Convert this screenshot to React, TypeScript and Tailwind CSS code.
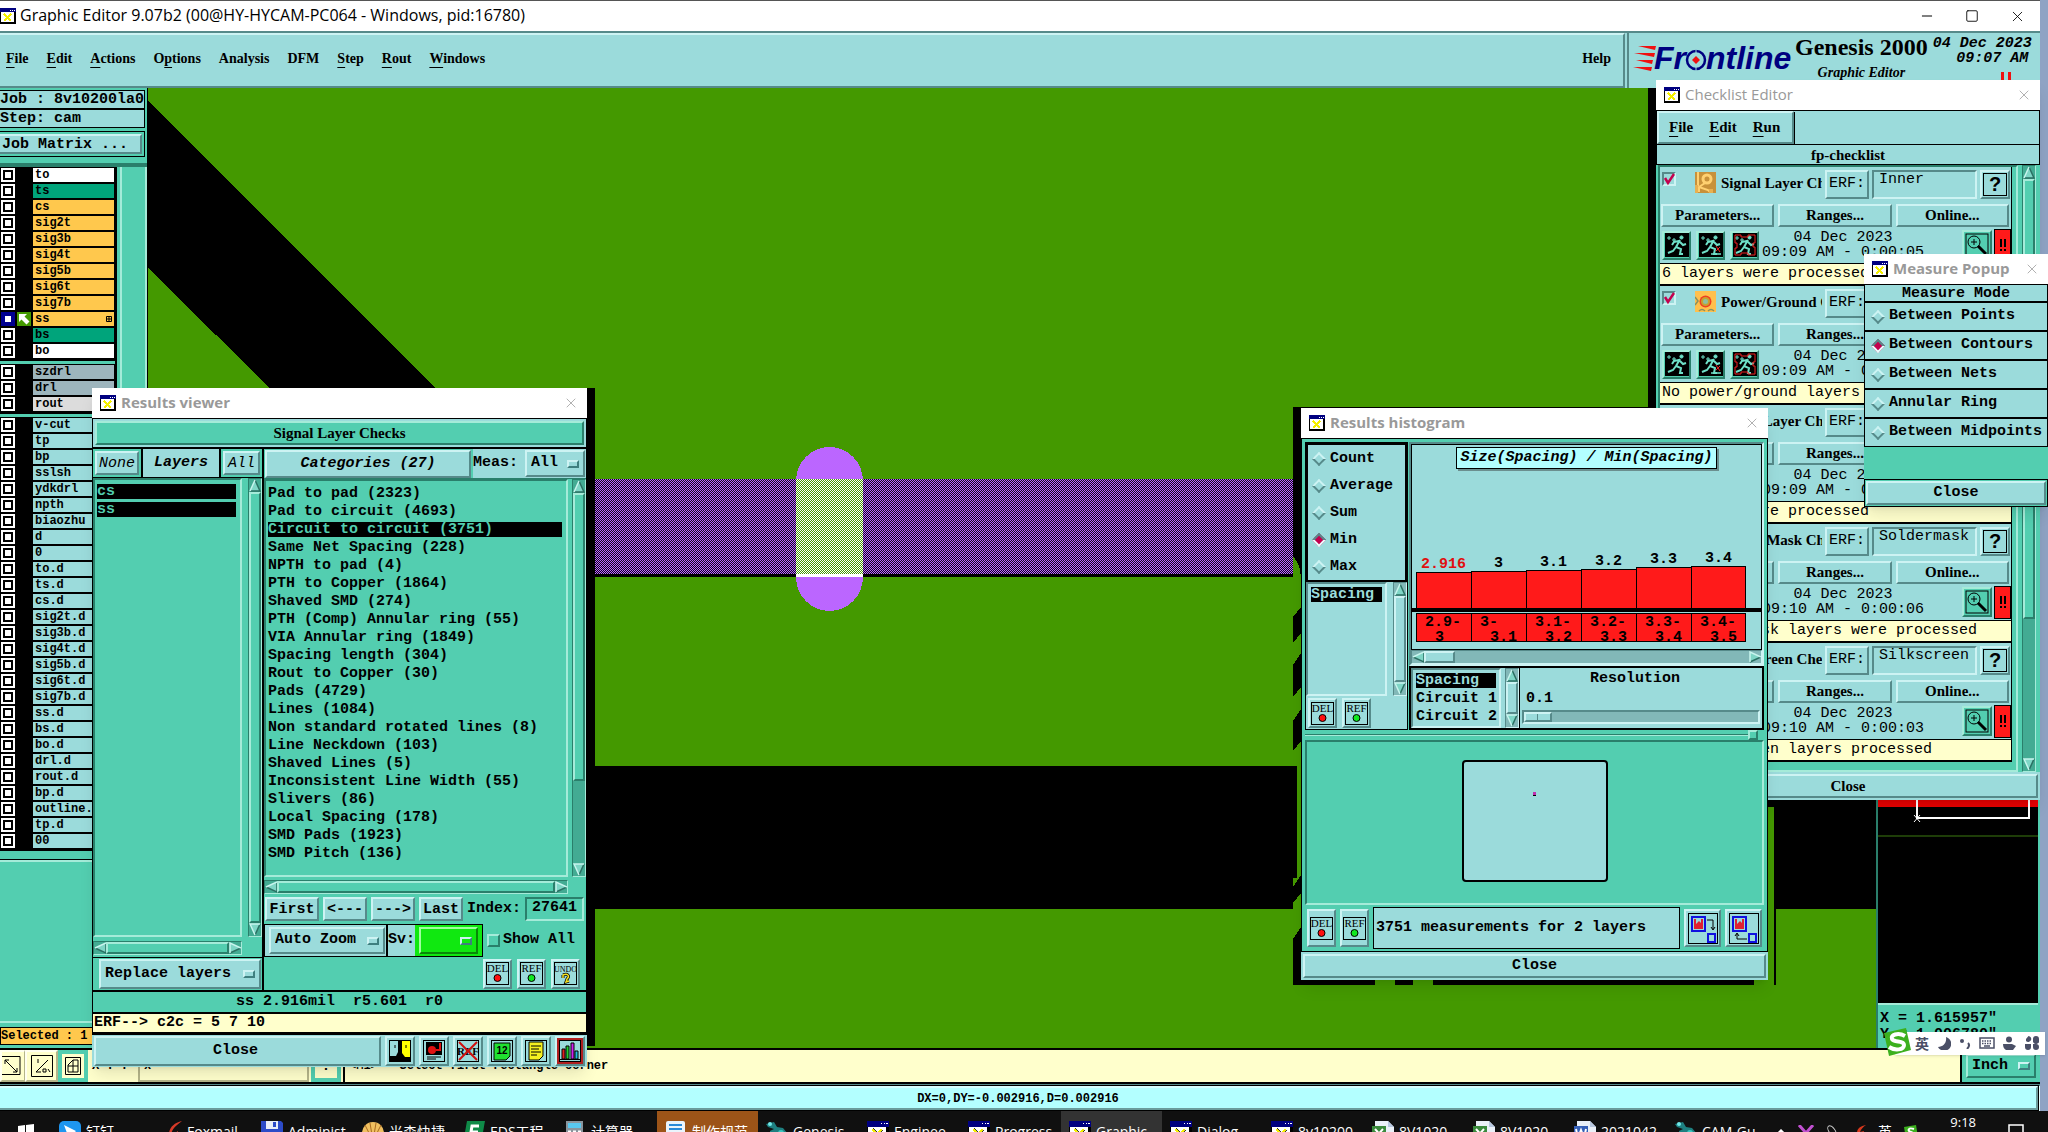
import React from "react";
import { X, Minus, Square } from "lucide-react";

const MONO = "font-['Liberation_Mono',monospace]";
const SERIF = "font-['Liberation_Serif',serif]";
const SANS = "font-['Open_Sans','Noto_Sans_CJK_SC',sans-serif]";

// motif style bevels
const CYAN_UP =
  "bg-[#9bdbdb] border-2 border-t-[#cdf3f3] border-l-[#cdf3f3] border-b-[#568a8a] border-r-[#568a8a]";
const CYAN_DOWN =
  "bg-[#9bdbdb] border-2 border-t-[#568a8a] border-l-[#568a8a] border-b-[#cdf3f3] border-r-[#cdf3f3]";
const TEAL_UP =
  "bg-[#53ceb0] border-2 border-t-[#a5ebd9] border-l-[#a5ebd9] border-b-[#2a7f6b] border-r-[#2a7f6b]";
const TEAL_DOWN =
  "bg-[#53ceb0] border-2 border-t-[#2a7f6b] border-l-[#2a7f6b] border-b-[#a5ebd9] border-r-[#a5ebd9]";
const CREAM_UP =
  "bg-[#ffffcc] border-2 border-t-[#fffff0] border-l-[#fffff0] border-b-[#b5b58a] border-r-[#b5b58a]";

const mainMenu = [
  { name: "File", at: 0 },
  { name: "Edit", at: 0 },
  { name: "Actions", at: 0 },
  { name: "Options", at: 1 },
  { name: "Analysis", at: -1 },
  { name: "DFM", at: -1 },
  { name: "Step", at: 0 },
  { name: "Rout", at: 0 },
  { name: "Windows", at: 0 },
];

const WHITE = "bg-white";
const GREEN = "bg-[#00a47b]";
const ORANGE = "bg-[#ffc84d]";
const GRAY = "bg-[#9db5bd]";
const CYAN = "bg-[#9bdbdb]";

const layerGroups = [
  [
    ["to", WHITE],
    ["ts", GREEN],
    ["cs", ORANGE],
    ["sig2t", ORANGE],
    ["sig3b", ORANGE],
    ["sig4t", ORANGE],
    ["sig5b", ORANGE],
    ["sig6t", ORANGE],
    ["sig7b", ORANGE],
    ["ss", ORANGE],
    ["bs", GREEN],
    ["bo", WHITE],
  ],
  [
    ["szdrl", GRAY],
    ["drl", GRAY],
    ["rout", "bg-[#dcdcdc]"],
  ],
  [
    "v-cut", "tp", "bp", "sslsh", "ydkdrl", "npth", "biaozhu", "d", "0",
    "to.d", "ts.d", "cs.d", "sig2t.d", "sig3b.d", "sig4t.d", "sig5b.d",
    "sig6t.d", "sig7b.d", "ss.d", "bs.d", "bo.d", "drl.d", "rout.d", "bp.d",
    "outline.d", "tp.d", "00",
  ].map((name) => [name, CYAN]),
];

const categories = [
  "Pad to pad (2323)",
  "Pad to circuit (4693)",
  "Circuit to circuit (3751)",
  "Same Net Spacing (228)",
  "NPTH to pad (4)",
  "PTH to Copper (1864)",
  "Shaved SMD (274)",
  "PTH (Comp) Annular ring (55)",
  "VIA Annular ring (1849)",
  "Spacing length (304)",
  "Rout to Copper (30)",
  "Pads (4729)",
  "Lines (1084)",
  "Non standard rotated lines (8)",
  "Line Neckdown (103)",
  "Shaved Lines (5)",
  "Inconsistent Line Width (55)",
  "Slivers (86)",
  "Local Spacing (178)",
  "SMD Pads (1923)",
  "SMD Pitch (136)",
];

const bars = [
  { value: "2.916", from: "2.9-", to: "3", height: 36 },
  { value: "3", from: "3-", to: "3.1", height: 37 },
  { value: "3.1", from: "3.1-", to: "3.2", height: 38 },
  { value: "3.2", from: "3.2-", to: "3.3", height: 39 },
  { value: "3.3", from: "3.3-", to: "3.4", height: 41 },
  { value: "3.4", from: "3.4-", to: "3.5", height: 42 },
];

const checks = [
  { title: "Signal Layer Checks", erf: "Inner", time: "09:09 AM - 0:00:05", message: "6 layers were processed" },
  { title: "Power/Ground Checks", erf: "Inner", time: "09:09 AM - 0:00:00", message: "No power/ground layers" },
  { title: "Outer Layer Checks", erf: "Outer", time: "09:09 AM - 0:00:05", message: "6 layers were processed" },
  { title: "Solder Mask Checks", erf: "Soldermask", time: "09:10 AM - 0:00:06", message: "2 solder mask layers were processed" },
  { title: "Silk Screen Checks", erf: "Silkscreen", time: "09:10 AM - 0:00:03", message: "2 silk screen layers processed" },
];

const measureModes = [
  "Between Points",
  "Between Contours",
  "Between Nets",
  "Annular Ring",
  "Between Midpoints",
];

const tasks = [
  { name: "钉钉", icon: "ding" },
  { name: "Foxmail", icon: "fox" },
  { name: "Administ", icon: "disk" },
  { name: "光森快捷", icon: "shell" },
  { name: "EDS工程", icon: "eds" },
  { name: "计算器", icon: "calc" },
  { name: "制作规范", icon: "note" },
  { name: "Genesis", icon: "genesis" },
  { name: "Enginee", icon: "x" },
  { name: "Progress", icon: "x" },
  { name: "Graphic", icon: "x" },
  { name: "Dialog", icon: "x" },
  { name: "8v10200", icon: "x" },
  { name: "8V1020", icon: "excel" },
  { name: "8V1020", icon: "excel" },
  { name: "2021042", icon: "word" },
  { name: "CAM-Gu", icon: "genesis" },
];

const XIcon = ({ className = "size-4" }: { className?: string }) => (
  <svg viewBox="0 0 16 16" className={`${className} shrink-0`} shapeRendering="crispEdges">
    <rect x="0" y="0" width="16" height="16" fill="#000" />
    <rect x="1" y="1" width="13" height="13" fill="#fff" />
    <rect x="0" y="0" width="16" height="4" fill="#000080" />
    <path d="M10 2h1M12 2h1M14 2h1" stroke="#fff" strokeWidth="1" />
    <path d="M4 6l7 7M11 6l-7 7" stroke="#333" strokeWidth="2" />
    <path d="M4 6l7 7M11 6l-7 7" stroke="#f5f000" strokeWidth="1.500" />
  </svg>
);

const TitleBar = ({ title }: { title: string }) => (
  <div className={`flex h-[30px] items-center bg-white pl-2 pr-2 text-[15px] leading-7 text-[#999] ${SANS}`}>
    <XIcon />
    <span className="ml-[5px] h-[30px] flex-1">{title}</span>
    <button aria-label={`Close ${title}`} className="text-[#8a8a8a]">
      <X size={16} strokeWidth={1} />
    </button>
  </div>
);

const Tri = ({ dir }: { dir: "up" | "down" | "left" | "right" }) => {
  const shapes = {
    up: ["M6 1L1 12", "M6 1L11 12H1", "6,1 11,12 1,12"],
    down: ["M11 1H1L6 12", "M11 1L6 12", "1,1 11,1 6,12"],
    left: ["M1 6L12 1", "M12 1V11L1 6", "1,6 12,1 12,11"],
    right: ["M1 11V1L12 6", "M12 6L1 11", "1,1 12,6 1,11"],
  };
  const [light, dark, body] = shapes[dir];
  return (
    <svg viewBox="0 0 12 13" className="h-[13px] w-3 shrink-0">
      <polygon points={body} fill="#7fd6c6" />
      <path d={dark} fill="none" stroke="#2a6f62" strokeWidth="1.5" />
      <path d={light} fill="none" stroke="#c8f5ee" strokeWidth="1.5" />
    </svg>
  );
};

const VScroll = ({ teal, thumb = "flex-1" }: { teal?: boolean; thumb?: string }) => (
  <div
    className={`flex w-[14px] shrink-0 flex-col items-center border ${
      teal
        ? "border-b-[#a5ebd9] border-l-[#2a7f6b] border-r-[#a5ebd9] border-t-[#2a7f6b] bg-[#43ab93]"
        : "border-b-[#cdf3f3] border-l-[#568a8a] border-r-[#cdf3f3] border-t-[#568a8a] bg-[#82b8b8]"
    }`}
  >
    <Tri dir="up" />
    <div className={`w-full ${thumb} ${teal ? TEAL_UP : CYAN_UP}`} />
    <div className={thumb === "flex-1" ? "" : "flex-1"} />
    <Tri dir="down" />
  </div>
);

const HScroll = ({ teal, thumb = "flex-1" }: { teal?: boolean; thumb?: string }) => (
  <div
    className={`flex h-[14px] items-center border ${
      teal
        ? "border-b-[#a5ebd9] border-l-[#2a7f6b] border-r-[#a5ebd9] border-t-[#2a7f6b] bg-[#43ab93]"
        : "border-b-[#cdf3f3] border-l-[#568a8a] border-r-[#cdf3f3] border-t-[#568a8a] bg-[#82b8b8]"
    }`}
  >
    <Tri dir="left" />
    <div className={`h-full ${thumb} ${teal ? TEAL_UP : CYAN_UP}`} />
    <div className={thumb === "flex-1" ? "" : "flex-1"} />
    <Tri dir="right" />
  </div>
);

const OptionMenu = ({
  label,
  value,
  className,
  bevel = CYAN_UP,
}: {
  label: string;
  value: string;
  className: string;
  bevel?: string;
}) => (
  <div className={`flex items-center ${bevel} ${className}`}>
    <select aria-label={label} className="min-w-0 flex-1 appearance-none bg-transparent outline-none">
      <option>{value}</option>
    </select>
    <span
      className="mr-1 h-2 w-3 shrink-0 border-2 border-b-[#3f7f7f] border-l-[#cdf3f3] border-r-[#3f7f7f] border-t-[#cdf3f3]"
    />
  </div>
);

const Diamond = ({ name, label, checked }: { name: string; label: string; checked?: boolean }) => (
  <label className="flex items-center gap-1.5">
    <input
      type="radio"
      name={name}
      defaultChecked={checked}
      className="ml-0.5 size-[10px] shrink-0 rotate-45 appearance-none border-2 border-b-[#568a8a] border-l-[#cdf3f3] border-r-[#568a8a] border-t-[#cdf3f3] checked:border-b-[#e8ffff] checked:border-l-[#568a8a] checked:border-r-[#e8ffff] checked:border-t-[#568a8a] checked:bg-[#c4004e]"
    />
    {label}
  </label>
);

const MarkButton = ({ text, className = "h-[30px] w-[29px]" }: { text: string; className?: string }) => {
  const dot = { DEL: "#ff1010", REF: "#10e820", UNDO: "" }[text];
  return (
    <button className={`flex items-center justify-center font-normal ${CYAN_UP} ${className}`}>
      <svg viewBox="0 0 23 23" className="h-[23px] w-[23px]">
        <rect x=".5" y=".5" width="22" height="22" fill="none" stroke="#000" />
        <text x="11.5" y="10" textAnchor="middle" fontFamily="Liberation Serif" fontSize={text === "UNDO" ? 8 : 11}>
          {text}
        </text>
        {dot ? (
          <circle cx="11.5" cy="16" r="3.5" fill={dot} stroke="#000" />
        ) : (
          <>
            <path d="M9 13c5-2 7 1 4 4l-1 3 3-1M9 13v3" fill="none" stroke="#000" strokeWidth="3" />
            <path d="M9 13c5-2 7 1 4 4l-1 3 3-1M9 13v3" fill="none" stroke="#f5e020" strokeWidth="1.500" />
          </>
        )}
      </svg>
    </button>
  );
};

const Runner = ({ kind }: { kind: number }) => (
  <button
    aria-label={["Run", "Run on selected", "Run in area"][kind]}
    className={`flex size-[29px] items-center justify-center ${TEAL_UP}`}
  >
    <svg viewBox="0 0 24 24" className="size-6 bg-black" fill="none" stroke="#6fe0c8">
      <path d="M2 5h4M4 3v4M7 7h4M9 5v4" strokeWidth="1" />
      <circle cx="16.500" cy="4.500" r="1.600" fill="#6fe0c8" />
      <path d="M15 7l-4 7M14 8l-5 1-2 3M15 9l3 3 3-1M11 14l5 2-1 5h3M11 14l-3 4-5 2" strokeWidth="2" />
      {kind === 1 && <path d="M12 21h10" strokeWidth="1.500" />}
      {kind === 1 && <path d="M17 13l4 6M21 14l-4 4" stroke="#f02020" />}
      {kind === 2 && <path d="M2 2h6v2h7V2h7v8h-2v4h2v8h-7v-2H8v2H2v-7h2v-5H2z" stroke="#f02020" />}
    </svg>
  </button>
);

const Magnifier = () => (
  <button aria-label="View results" className={`flex size-[30px] items-center justify-center ${TEAL_UP}`}>
    <svg viewBox="0 0 24 24" className="size-6" fill="none" stroke="#000">
      <rect x="1" y="1" width="22" height="22" />
      <circle cx="9" cy="9" r="6" />
      <path d="M6 9h6M9 6v6" />
      <path d="M13 13l8 8" strokeWidth="3" />
    </svg>
  </button>
);

const CheckIcon = ({ index }: { index: number }) => (
  <svg viewBox="0 0 21 21" className="ml-[18px] mt-0.5 size-[21px] shrink-0">
    <rect width="21" height="21" fill={index === 0 ? "#c8913a" : "#ffc04d"} />
    {index === 0 ? (
      <>
        <circle cx="12" cy="7" r="4" fill="none" stroke="#ffd070" strokeWidth="3" />
        <path d="M3 0v14M10 11l-6 4v5M4 15l9 3 3 3" stroke="#ffd070" strokeWidth="2" fill="none" />
        <path d="M0 13h3v8H0zM14 17h4v4h-4z" fill="#e8b050" />
      </>
    ) : (
      <>
        <circle cx="10.500" cy="10.500" r="6" fill="#f04020" />
        <circle cx="10.500" cy="10.500" r="3.500" fill="#8fbfa0" stroke="#c8a030" strokeWidth="2" />
        <path d="M0 6l3 4-3 4M4 20c2-2 4-2 6 0M13 20c2-2 4-2 6 0" stroke="#8a9060" strokeWidth="1.500" fill="none" />
      </>
    )}
  </svg>
);

const BoardView = () => (
  <svg className="block h-full w-full bg-[#449900]" shapeRendering="crispEdges">
    <defs>
      <pattern id="mesh" width="2" height="2" patternUnits="userSpaceOnUse">
        <rect width="2" height="2" fill="#12061f" />
        <path d="M0 0h1v1H0zM1 1h1v1H1z" fill="#bb66ff" />
      </pattern>
      <pattern id="meshLight" width="2" height="2" patternUnits="userSpaceOnUse">
        <rect width="2" height="2" fill="#449900" />
        <path d="M0 0h1v1H0zM1 1h1v1H1z" fill="#fff" />
      </pattern>
    </defs>
    <g transform="translate(-148 -88)">
      <polygon points="148,101 450,402 284,402 148,268" />
      <rect x="560" y="388" width="35" height="658" />
      <rect x="560" y="766" width="740" height="143" />
      <rect x="1293" y="407" width="475" height="578" />
      <path
        d="M1293 557q8 6 8 26v24l-8 10zM1293 643l8-10v20l-8 12zM1293 697l8-10v22l-8 12zM1293 751l8-10v134l-8 12z"
        fill="#449900"
      />
      <rect x="1293" y="766" width="4" height="112" />
      <path d="M1293 903l8-10v34l-8 12z" fill="#449900" />
      <path d="M1375 970h20v15h-20zM1413 970h20v15h-20zM1754 970h20v15h-20zM1768 807h6v178h-6z" fill="#449900" />
      <rect x="1774" y="807" width="2" height="178" />
      <rect x="1648" y="88" width="8" height="330" />
      <rect x="1768" y="790" width="108" height="17" />
      <rect x="1776" y="798" width="100" height="111" />
      <rect x="595" y="479" width="698" height="95" fill="url(#mesh)" />
      <rect x="595" y="574" width="698" height="3" />
      <rect x="796" y="447" width="67" height="164" rx="34" fill="#bb66ff" />
      <rect x="796" y="479" width="67" height="95" fill="url(#meshLight)" />
      <rect x="796" y="574" width="67" height="3" fill="#fff" />
    </g>
  </svg>
);

const LayerPanel = () => (
  <aside className="flex w-[148px] shrink-0 flex-col border-r border-black bg-[#53ceb0]">
    <div className={`mr-0.5 mt-0.5 text-[15px] font-bold leading-[18px] ${MONO}`}>
      <div className="h-[19px] overflow-hidden whitespace-nowrap border border-l-0 border-black bg-[#9bdbdb]">
        Job : 8v10200la0
      </div>
      <div className="h-[19px] border border-l-0 border-black bg-[#9bdbdb]">Step: cam</div>
      <div className="mt-[3px] h-[26px] border border-l-0 border-black p-0.5 pl-0">
        <button className={`h-full w-full border-l-0 pl-0.5 text-left ${CYAN_UP}`}>Job Matrix ...</button>
      </div>
    </div>
    <div className="mt-1.5 flex border-t-4 border-[#2a7f6b]">
      <div className={`w-[117px] border-r-2 border-black bg-[#53ceb0] text-xs font-bold ${MONO}`}>
        {layerGroups.map((group, i) => (
          <div key={i} className="mb-[3px] border border-l-0 border-black bg-black">
            {group.map(([name, color]) => (
              <label key={name} className="flex h-4 items-center border-b-2 border-black leading-[14px]">
                <input
                  type="checkbox"
                  aria-label={name}
                  className={`ml-px size-[14px] shrink-0 appearance-none border-2 bg-white ring-2 ring-inset ${
                    name === "ss" ? "border-[#000090] ring-[#000090]" : "border-white ring-black"
                  }`}
                />
                <span className="flex w-[18px] justify-center">
                  {name === "ss" && (
                    <svg viewBox="0 0 14 14" className="size-[14px] bg-[#449900]">
                      <path d="M2 2h8L7.500 4.500l5 5-3 3-5-5L2 10z" fill="#fff" />
                    </svg>
                  )}
                </span>
                <span className={`flex h-[14px] flex-1 items-center justify-between pl-0.5 pr-0.5 ${color}`}>
                  {name}
                  {name === "ss" && (
                    <svg viewBox="0 0 6 6" className="size-[6px]">
                      <path d="M.5.5h5v5h-5zM3 0v6M0 3h6" fill="none" stroke="#000" />
                    </svg>
                  )}
                </span>
              </label>
            ))}
          </div>
        ))}
      </div>
      <div className="ml-[3px] flex-1 border-l-2 border-r-2 border-[#a5ebd9]" />
    </div>
    <div className="mt-[6px] flex-1 border-b-2 border-t-2 border-[#a5ebd9] shadow-[0_-1px_0_#000]" />
    <div className={`mt-1 h-[18px] border border-black bg-[#ffc84d] text-xs font-bold leading-4 ${MONO}`}>
      Selected : 1
    </div>
    <div className="h-[3px]" />
  </aside>
);

const OverviewPanel = () => (
  <aside className="flex w-[164px] shrink-0 flex-col border-l-2 border-[#2a7f6b] bg-[#53ceb0]">
    <svg className="mr-0.5 block flex-1 bg-black">
      <g transform="translate(-1879 -88)">
        <rect x="1879" y="700" width="170" height="107" fill="#e80000" />
        <path d="M1918 780v38h112v-38" fill="none" stroke="#fff" strokeWidth="2" />
        <path d="M1915 815l6 7M1921 815l-6 7" stroke="#fff" />
        <path d="M1879 836h170" stroke="#3c7a10" />
      </g>
    </svg>
    <div className={`mr-0.5 h-[45px] overflow-hidden border-t-2 border-[#a5ebd9] pl-0.5 pt-[6px] text-[15px] font-bold leading-4 ${MONO}`}>
      <div>X = 1.615957"</div>
      <div>Y = 1.006780"</div>
    </div>
  </aside>
);

const FrontlineLogo = () => (
  <svg viewBox="0 0 162 34" className="h-[34px] w-[162px]" fontFamily="Liberation Sans" fontWeight="bold" fontStyle="italic">
    <path d="M5 5h18l-1 4zM1 12h21l-1 4zM3 19h17l-1 4zM0 26h19l-1 4z" fill="#f01010" />
    <text x="21" y="28" fontSize="32" fill="#000080">Fr</text>
    <circle cx="63" cy="19" r="9" fill="none" stroke="#000080" strokeWidth="2.500" />
    <path d="M63 15l4 4-4 4-4-4z" fill="#f01010" />
    <path d="M63 6v6M63 26v6" stroke="#9bdbdb" strokeWidth="1" />
    <text x="73" y="28" fontSize="32" fill="#000080">ntline</text>
  </svg>
);

const ResultsViewer = () => (
  <section className={`absolute left-[92px] top-[388px] w-[495px] bg-[#9bdbdb] text-[15px] font-bold shadow-lg ${MONO}`}>
    <TitleBar title="Results viewer" />
    <div className="border border-black">
      <div className="p-0.5">
        <div className={`h-[24px] text-center leading-5 ${TEAL_UP} ${SERIF}`}>Signal Layer Checks</div>
      </div>
      <div className="flex border-y-2 border-black">
        <div className="flex w-[171px] shrink-0 flex-col border-r-2 border-black bg-[#53ceb0]">
          <div className="flex h-[29px] border-b border-black">
            <button className={`m-0.5 w-[44px] font-normal italic ${CYAN_UP}`}>None</button>
            <div className="flex flex-1 items-center justify-center border-x-2 border-black bg-[#9bdbdb] italic">
              Layers
            </div>
            <button className={`m-0.5 w-[37px] font-normal italic ${CYAN_UP}`}>All</button>
          </div>
          <div className="flex flex-1 gap-1.5">
            <ul className={`flex-1 pl-0.5 pr-1 pt-1 leading-[15px] ${TEAL_DOWN}`}>
              <li className="mb-[3px] bg-black text-[#53ceb0]">cs</li>
              <li className="bg-black text-[#53ceb0]">ss</li>
            </ul>
            <VScroll teal />
          </div>
          <div className="mr-5 mt-1">
            <HScroll teal />
          </div>
          <div className="mt-0.5 h-[33px] border-t border-black p-px pl-1.5">
            <OptionMenu label="Layer mode" value="Replace layers" className="h-[30px] pl-1" />
          </div>
        </div>

        <div className="flex flex-1 flex-col bg-[#53ceb0]">
          <div className="flex h-[30px] gap-0.5 border-b border-[#2a7f6b]">
            <button className={`ml-px mt-px w-[206px] italic ${CYAN_UP}`}>Categories (27)</button>
            <div className="flex flex-1 items-center bg-[#9bdbdb]">
              Meas:
              <OptionMenu label="Measurements" value="All" className="ml-auto mr-px h-[27px] w-[60px] pl-1" />
            </div>
          </div>
          <div className="flex gap-1">
            <ul className={`h-[398px] flex-1 pl-0.5 pr-1 pt-[5px] ${TEAL_DOWN}`}>
              {categories.map((name, i) => (
                <li
                  key={name}
                  className={`mb-[3px] whitespace-nowrap leading-[15px] ${i === 2 ? "bg-black text-[#53ceb0]" : ""}`}
                >
                  {name}
                </li>
              ))}
            </ul>
            <VScroll teal thumb="h-[288px]" />
          </div>
          <div className="mr-[18px] mt-[3px]">
            <HScroll teal />
          </div>
          <div className="mt-[3px] flex h-6 gap-1 pl-px pr-0.5">
            <button className={`w-[54px] ${CYAN_UP}`}>First</button>
            <button className={`w-[44px] ${CYAN_UP}`}>&lt;---</button>
            <button className={`w-[44px] ${CYAN_UP}`}>---&gt;</button>
            <button className={`w-[44px] ${CYAN_UP}`}>Last</button>
            <label className="flex flex-1 items-center">
              Index:
              <input defaultValue="27641" className={`ml-1 h-full w-[59px] pb-1 pl-[5px] ${TEAL_DOWN}`} />
            </label>
          </div>
          <div className="mt-[3px] flex h-[33px] items-center">
            <div className="flex h-full border border-black">
              <div className="border-r-2 border-black bg-[#9bdbdb] py-0.5 pl-1 pr-px">
                <OptionMenu label="Zoom mode" value="Auto Zoom" className="h-[27px] w-[116px] pl-1" />
              </div>
              <span className="flex w-[27px] items-center bg-[#9bdbdb]">Sv:</span>
              <div className="bg-[#10e810] px-1 py-0.5">
                <OptionMenu
                  label="Severity"
                  value=""
                  className="h-[27px] w-[59px]"
                  bevel="border-2 border-t-[#a0ffa0] border-l-[#a0ffa0] border-b-[#088808] border-r-[#088808]"
                />
              </div>
            </div>
            <label className="flex items-center gap-[3px] whitespace-nowrap pl-1">
              <input type="checkbox" className={`size-[13px] shrink-0 appearance-none border ${TEAL_UP}`} />
              Show All
            </label>
          </div>
          <div className="flex h-[33px] items-center justify-end gap-[5px] pr-1.5">
            <MarkButton text="DEL" />
            <MarkButton text="REF" />
            <MarkButton text="UNDO" />
          </div>
        </div>
      </div>
      <div className="h-5 whitespace-pre bg-[#53ceb0] text-center leading-5">ss 2.916mil  r5.601  r0</div>
      <div className="h-[22px] border-y-2 border-black bg-[#ffffcc] pl-px leading-[18px]">ERF--&gt; c2c = 5 7 10</div>
    </div>
    <div className="flex h-8 items-center gap-1 px-0.5">
      <button className={`h-[30px] flex-1 pr-1 ${CYAN_UP}`}>Close</button>
      <button aria-label="Display" className={`flex size-[30px] items-center justify-center ${CYAN_UP}`}>
        <svg viewBox="0 0 22 22" className="size-[22px]">
          <rect width="22" height="22" fill="#000" />
          <path d="M1 1h8v11l-2 4H1z" fill="#9bdbdb" />
          <path d="M13 1h8v16h-5l-3-4z" fill="#ff0" />
          <path d="M6 5v3M17 5v3" stroke="#000" />
        </svg>
      </button>
      <button aria-label="Mark" className={`flex size-[30px] items-center justify-center ${CYAN_UP}`}>
        <svg viewBox="0 0 22 22" className="size-[22px]">
          <rect x=".5" y=".5" width="21" height="21" fill="none" stroke="#000" />
          <rect x="3" y="2" width="16" height="13" fill="#000" />
          <circle cx="9" cy="10" r="4" fill="#e01010" />
          <path d="M13 10h4V3" stroke="#e01010" strokeWidth="2" fill="none" />
          <path d="M4 17h14M4 19h9" stroke="#000" />
        </svg>
      </button>
      <button aria-label="Remove references" className={`flex size-[30px] items-center justify-center ${CYAN_UP}`}>
        <svg viewBox="0 0 22 22" className="size-[22px]">
          <rect x=".5" y=".5" width="21" height="21" fill="none" stroke="#000" />
          <text x="11" y="15" textAnchor="middle" fontFamily="Liberation Serif" fontSize="11">REF</text>
          <path d="M2 2l18 18M20 2L2 20" stroke="#d01010" strokeWidth="2" />
        </svg>
      </button>
      <button aria-label="Numbering" className={`flex size-[30px] items-center justify-center ${CYAN_UP}`}>
        <svg viewBox="0 0 22 22" className="size-[22px]">
          <rect x=".5" y=".5" width="21" height="21" fill="none" stroke="#000" />
          <path d="M3 3h16v13l-4 4H3z" fill="#20e030" stroke="#000" />
          <text x="11" y="14" textAnchor="middle" fontFamily="Liberation Sans" fontWeight="bold" fontSize="10">12</text>
        </svg>
      </button>
      <button aria-label="Notes" className={`flex size-[30px] items-center justify-center ${CYAN_UP}`}>
        <svg viewBox="0 0 22 22" className="size-[22px]">
          <rect x=".5" y=".5" width="21" height="21" fill="none" stroke="#000" />
          <path d="M4 2h14v14l-4 4H4z" fill="#f5f020" stroke="#000" />
          <path d="M6 6h10M6 9h8M6 12h10M6 15h6" stroke="#000" />
        </svg>
      </button>
      <button
        aria-label="Histogram"
        className="flex size-[30px] items-center justify-center border-2 border-b-[#568a8a] border-l-[#cdf3f3] border-r-[#568a8a] border-t-[#cdf3f3] bg-[#b02020]"
      >
        <svg viewBox="0 0 22 22" className="size-[22px] bg-[#9bdbdb]">
          <rect x=".5" y=".5" width="21" height="21" fill="none" stroke="#000" />
          <path d="M3 19V9h3v10z" fill="#e02020" stroke="#000" />
          <path d="M7 19V6h3v13z" fill="#20d030" stroke="#000" />
          <path d="M12 19V3h3v16z" fill="#d020f0" stroke="#000" />
          <path d="M16 19v-8h3v8z" fill="#20c0e0" stroke="#000" />
          <path d="M1 19.500h20" stroke="#000" />
        </svg>
      </button>
    </div>
  </section>
);

const ResultsHistogram = () => (
  <section className={`absolute left-[1301px] top-[408px] w-[467px] bg-[#9bdbdb] text-[15px] font-bold shadow-lg ${MONO}`}>
    <TitleBar title="Results histogram" />
    <div className="border border-black bg-[#53ceb0] px-[3px] pt-[3px]">
      <div className="flex gap-px">
        <div className="flex w-[103px] shrink-0 flex-col border border-black bg-[#9bdbdb]">
          <div className="flex h-[139px] flex-col justify-between border-2 border-black py-1 pl-1 leading-[19px]">
            {["Count", "Average", "Sum", "Min", "Max"].map((name) => (
              <Diamond key={name} name="stat" label={name} checked={name === "Min"} />
            ))}
          </div>
          <div className="flex h-[114px] gap-1.5">
            <ul className={`flex-1 p-[3px] leading-[15px] ${CYAN_DOWN}`}>
              <li className="bg-black text-[#9bdbdb]">Spacing</li>
            </ul>
            <VScroll />
          </div>
          <div className="flex gap-[5px] px-0.5 pt-0.5">
            <MarkButton text="DEL" />
            <MarkButton text="REF" />
          </div>
        </div>

        <div className="min-w-0 flex-1">
          <div className={CYAN_DOWN}>
            <div className="flex h-[206px] flex-col border border-black">
              <div className="mt-0.5 self-center border border-black bg-[#b3ffff] px-[3px] italic leading-5 shadow-[2px_2px_0_#6b8f8f]">
                Size(Spacing) / Min(Spacing)
              </div>
              <div className="flex flex-1 items-end pl-1">
                {bars.map((bar, i) => (
                  <div key={bar.value} className={`w-[55px] text-center leading-[15px] ${i === 0 ? "text-[#e01010]" : ""}`}>
                    {bar.value}
                    <div
                      className={`border border-b-0 border-black bg-[#ff1a1a] ${i < bars.length - 1 ? "border-r-0" : ""}`}
                      style={{ height: bar.height }}
                    />
                  </div>
                ))}
              </div>
              <div className="h-1 bg-black" />
              <div className="mb-[7px] ml-1 mt-px flex">
                {bars.map((bar, i) => (
                  <div
                    key={bar.from}
                    className={`flex h-[29px] w-[55px] flex-col border border-black bg-[#ff1a1a] pl-2 pt-px leading-[15px] ${
                      i < bars.length - 1 ? "border-r-0" : ""
                    }`}
                  >
                    <span>{bar.from}</span>
                    <span className="pl-2.5">{bar.to}</span>
                  </div>
                ))}
              </div>
            </div>
            <HScroll thumb="w-[31px]" />
          </div>
          <div className="flex h-[64px] border-2 border-black bg-[#9bdbdb]">
            <ul className={`w-[90px] pl-[3px] pt-[3px] leading-[15px] ${CYAN_DOWN}`}>
              <li className="mb-[3px] mr-[3px] bg-black text-[#9bdbdb]">Spacing</li>
              <li className="mb-[3px]">Circuit 1</li>
              <li>Circuit 2</li>
            </ul>
            <div className="ml-1 flex border-r border-black">
              <VScroll />
            </div>
            <label className="flex flex-1 flex-col px-0.5 pt-0.5 leading-[22px]">
              <span className="pr-3 text-center leading-[18px]">Resolution</span>
              <span className="pl-1">0.1</span>
              <input
                type="range"
                defaultValue={0}
                className="h-[14px] w-full appearance-none border-2 border-b-[#cdf3f3] border-l-[#568a8a] border-r-[#cdf3f3] border-t-[#568a8a] bg-[#82b8b8] [&::-webkit-slider-thumb]:h-[10px] [&::-webkit-slider-thumb]:w-7 [&::-webkit-slider-thumb]:appearance-none [&::-webkit-slider-thumb]:border-2 [&::-webkit-slider-thumb]:border-b-[#568a8a] [&::-webkit-slider-thumb]:border-l-[#cdf3f3] [&::-webkit-slider-thumb]:border-r-[#568a8a] [&::-webkit-slider-thumb]:border-t-[#cdf3f3] [&::-webkit-slider-thumb]:bg-[linear-gradient(90deg,#9bdbdb_11px,#568a8a_11px,#568a8a_12px,#9bdbdb_12px)]"
              />
            </label>
          </div>
        </div>
      </div>
      <div className="flex h-2.5 items-center pr-1.5">
        <div className="h-0.5 flex-1 border-t border-[#2a7f6b] bg-[#a5ebd9]" />
        <div className={`size-2.5 ${TEAL_UP}`} />
      </div>
      <div className={`flex h-[165px] justify-center pt-[18px] ${TEAL_DOWN}`}>
        <div className="flex h-[122px] w-[146px] justify-center rounded-sm border-2 border-black bg-[#9bdbdb] pt-[30px]">
          <div className="h-1 w-[3px] border-b border-black bg-[#c030b0]" />
        </div>
      </div>
      <div className="flex h-[46px] items-center gap-1 px-0.5">
        <MarkButton text="DEL" className="h-[38px] w-[29px]" />
        <MarkButton text="REF" className="h-[38px] w-[29px]" />
        <div className="flex h-[42px] flex-1 items-center border border-black bg-[#9bdbdb] pl-0.5">
          3751 measurements for 2 layers
        </div>
        {["Move down", "Move up"].map((name, i) => (
          <button
            key={name}
            aria-label={name}
            className={`flex h-[38px] w-[37px] items-center justify-center ${CYAN_UP}`}
          >
            <svg viewBox="0 0 30 31" className="h-[31px] w-[30px]">
              <rect x=".5" y=".5" width="29" height="30" fill="none" stroke="#000" />
              <path d="M4 4h13v14H4zM20 21h7v8h-7z" fill="none" stroke="#1010e0" strokeWidth="2" />
              <path d="M6 6h2v5l3-3 2 2V6h2v10H6z" fill="#e02030" />
              {i === 0 ? (
                <path d="M19 7h6v9M23 14l2 3 2-3" fill="none" stroke="#000" />
              ) : (
                <path d="M18 26H8v-5M6 23l2-3 2 3" fill="none" stroke="#000" />
              )}
            </svg>
          </button>
        ))}
      </div>
    </div>
    <div className="p-0.5">
      <button className={`block h-6 w-full leading-5 ${CYAN_UP}`}>Close</button>
    </div>
  </section>
);

const ChecklistEditor = () => (
  <section className={`absolute left-[1656px] top-20 w-[384px] bg-[#9bdbdb] text-[15px] shadow-lg ${MONO}`}>
    <TitleBar title="Checklist Editor" />
    <div className="border-x border-black">
      <div className="border-t border-black">
        <nav className={`flex h-[33px] w-[137px] items-center gap-4 pl-2.5 font-bold shadow-[1px_1px_0_#000] ${CYAN_UP} ${SERIF}`}>
          {["File", "Edit", "Run"].map((name) => (
            <button key={name} className="underline-offset-4 first-letter:underline">
              {name}
            </button>
          ))}
        </nav>
      </div>
      <div className={`h-[21px] border-y border-black text-center font-bold leading-5 ${SERIF}`}>fp-checklist</div>
    </div>
    <div className="flex h-[607px] bg-[#53ceb0]">
      <div className="ml-0.5 flex-1 border-2 border-b-[#a5ebd9] border-l-[#2a7f6b] border-r-[#a5ebd9] border-t-[#2a7f6b]">
        <div className="mr-1">
          {checks.map((check, i) => (
            <div key={check.title} className="flex h-[119px] flex-col border-b-2 border-r border-black bg-[#9bdbdb]">
              <div className="flex h-[37px] items-start gap-px pl-0.5 pt-[3px]">
                <span className="relative mt-0.5 size-[14px] shrink-0">
                  <input
                    type="checkbox"
                    defaultChecked
                    aria-label={check.title}
                    className={`block size-[14px] appearance-none ${CYAN_DOWN}`}
                  />
                  <svg viewBox="0 0 14 14" className="pointer-events-none absolute inset-0 size-[14px]">
                    <path d="M3 6l3 5 6-9" fill="none" stroke="#c4004e" strokeWidth="2.500" />
                  </svg>
                </span>
                <CheckIcon index={i} />
                <span className={`ml-1 w-[101px] overflow-hidden whitespace-nowrap font-bold leading-[26px] ${SERIF}`}>
                  {check.title}
                </span>
                <button className={`ml-0.5 h-[29px] w-11 shrink-0 ${CYAN_UP}`}>ERF:</button>
                <input
                  aria-label={`${check.title} ERF`}
                  defaultValue={check.erf}
                  className={`mx-0.5 h-[29px] w-[105px] shrink-0 pb-2.5 pl-[5px] ${CYAN_DOWN}`}
                />
                <button aria-label="Help" className={`h-[29px] w-[30px] shrink-0 p-px ${CYAN_UP}`}>
                  <span className="block h-full border border-black text-xl font-bold leading-[21px] font-['Liberation_Sans',sans-serif]">
                    ?
                  </span>
                </button>
              </div>
              <div className={`grid h-[23px] grid-cols-3 gap-1 pl-px pr-0.5 font-bold leading-[19px] ${SERIF}`}>
                <button className={CYAN_UP}>Parameters...</button>
                <button className={CYAN_UP}>Ranges...</button>
                <button className={CYAN_UP}>Online...</button>
              </div>
              <div className="flex flex-1 items-center pl-0.5">
                <div className="flex gap-[5px]">
                  <Runner kind={0} />
                  <Runner kind={1} />
                  <Runner kind={2} />
                </div>
                <div className="ml-0.5 w-[164px] whitespace-nowrap text-center leading-[15px]">
                  04 Dec 2023
                  <br />
                  {check.time}
                </div>
                <div className="ml-auto flex items-center gap-0.5">
                  <Magnifier />
                  <div className="flex h-[33px] w-[17px] items-center justify-center border border-black bg-[#ff1a1a]">
                    <svg viewBox="0 0 8 12" className="h-3 w-2">
                      <path d="M2 0v8M6 0v8M2 10v2M6 10v2" stroke="#000" strokeWidth="2" />
                    </svg>
                  </div>
                </div>
              </div>
              <div className="h-[21px] whitespace-nowrap border-t border-black bg-[#ffffcc] pl-0.5 leading-[20px]">
                {check.message}
              </div>
            </div>
          ))}
        </div>
      </div>
      <div className="mx-1 flex">
        <VScroll teal thumb="h-[440px] mt-auto" />
      </div>
    </div>
    <div className="p-0.5">
      <button className={`block h-6 w-full font-bold leading-5 ${CYAN_UP} ${SERIF}`}>Close</button>
    </div>
  </section>
);

const MeasurePopup = () => (
  <section className={`absolute left-[1864px] top-[254px] w-[184px] bg-[#53ceb0] text-[15px] font-bold shadow-lg ${MONO}`}>
    <TitleBar title="Measure Popup" />
    <fieldset className="border border-black bg-[#9bdbdb]">
      <legend className="sr-only">Measure Mode</legend>
      <div className="h-4 text-center leading-[18px]">Measure Mode</div>
      {measureModes.map((name) => (
        <div key={name} className="flex h-[29px] items-center border-t-2 border-black pl-1.5">
          <Diamond name="measure" label={name} checked={name === "Between Contours"} />
        </div>
      ))}
    </fieldset>
    <div className="mt-8 border border-black p-px">
      <button className={`block h-6 w-full leading-5 ${CYAN_UP}`}>Close</button>
    </div>
  </section>
);

const InputMethodBar = () => (
  <div className={`absolute left-[1883px] top-[1028px] flex h-7 w-[162px] items-center text-[#4a4f66] ${SANS}`}>
    <svg viewBox="0 0 28 28" className="z-10 size-7 shrink-0">
      <path d="M1 5L23 0l5 22L6 28z" fill="#3cb01e" />
      <path d="M22 8c-7-4-15-1-13 3s12 1 12 6-9 6-15 2" fill="none" stroke="#fff" strokeWidth="4" />
    </svg>
    <div className="-ml-4 mt-0.5 flex h-[23px] flex-1 items-center justify-between bg-white pl-5 pr-1.5 text-[14px] font-bold shadow">
      <span>英</span>
      <svg viewBox="0 0 14 14" className="size-[14px]">
        <path d="M9 1a7 7 0 1 1-8 10c5 0 9-4 8-10z" fill="#4a4f66" />
      </svg>
      <svg viewBox="0 0 12 12" className="size-3">
        <circle cx="3" cy="4" r="2" fill="#4a4f66" />
        <path d="M9 6c2 2 1 4-1 6" fill="none" stroke="#4a4f66" strokeWidth="2" />
      </svg>
      <svg viewBox="0 0 16 12" className="h-3 w-4" fill="none" stroke="#4a4f66" strokeWidth="1.500">
        <rect x="1" y="1" width="14" height="10" />
        <path d="M3 4h10M3 6.500h10" strokeDasharray="1.500 1" />
        <path d="M5 9h6" />
      </svg>
      <svg viewBox="0 0 14 14" className="size-[14px]" fill="#4a4f66">
        <circle cx="6" cy="3.500" r="3" />
        <path d="M0 8h9l4 2-3 4H3c-2-1-3-3-3-6z" />
      </svg>
      <svg viewBox="0 0 14 14" className="size-[14px]" fill="#4a4f66">
        <path d="M3.500 0A3 3 0 1 1 1 5V3zM8 3a3 3 0 1 1 6 0 3 3 0 0 1-6 3zM0 8h6v3a3 3 0 1 1-6 0zM8 8h3a3 3 0 1 1-3 3z" />
      </svg>
    </div>
  </div>
);

const TaskIcon = ({ icon }: { icon: string }) => {
  if (icon === "x") return <XIcon className="size-[22px]" />;
  return (
    <svg viewBox="0 0 22 22" className="size-[22px] shrink-0">
      {icon === "ding" && (
        <>
          <rect width="22" height="22" rx="5" fill="#1e96f0" />
          <path d="M5 4l12 6-3 3 1 1-5 6 1-5-3-3z" fill="#fff" />
        </>
      )}
      {icon === "fox" && <path d="M22 0c-8 2-12 6-13 12-3-1-5 1-8 8 4-4 7-3 9-1 5-1 8-5 8-9-3 2-5 4-7 4 1-7 6-10 11-14z" fill="#d83a28" />}
      {icon === "disk" && (
        <>
          <path d="M0 0h20l2 2v20H0z" fill="#2c4bc8" />
          <path d="M5 0h12v8H5z" fill="#e8eef8" />
          <path d="M12 1h3v5h-3z" fill="#2c4bc8" />
          <path d="M3 12h16v10H3z" fill="#fff" />
        </>
      )}
      {icon === "shell" && (
        <>
          <circle cx="11" cy="12" r="11" fill="#f0c060" />
          <path d="M11 20L3 4M11 20L8 2M11 20l3-18M11 20l8-16" stroke="#a86a20" />
        </>
      )}
      {icon === "eds" && (
        <>
          <path d="M4 0h18l-4 22H0z" fill="#0f8a48" />
          <path d="M16 5H9L7 17h4M9 11h6" stroke="#fff" strokeWidth="3" fill="none" />
        </>
      )}
      {icon === "calc" && (
        <>
          <rect x="2" width="17" height="22" fill="#8a949c" />
          <rect x="4" y="2" width="13" height="5" fill="#58c8f0" />
          <path d="M4 11h3M9 11h3M14 11h3M4 16h3M9 16h3M14 16h3" stroke="#fff" strokeWidth="3" />
        </>
      )}
      {icon === "note" && (
        <>
          <rect x="1" width="19" height="22" rx="2" fill="#eaf4fc" />
          <path d="M4 4h13M4 8h13M4 12h13M4 16h13" stroke="#2a8ad8" strokeWidth="2" />
        </>
      )}
      {icon === "genesis" && (
        <>
          <path d="M0 3l8-2 3 5 6 1 5 6v9H4V10l4-2-6-2z" fill="#1e7f80" />
          <circle cx="15" cy="12" r="3" fill="#3cc8c0" />
          <circle cx="4" cy="3" r="2" fill="#6fe8e8" />
        </>
      )}
      {(icon === "excel" || icon === "word") && (
        <>
          <path d="M3 0h13l6 6v16H3z" fill="#eaf0f8" />
          <path d="M16 0v6h6" fill="#b8c8e0" />
          <rect x="0" y="5" width="14" height="15" fill={icon === "excel" ? "#3a8a3c" : "#3560b8"} />
          <path d={icon === "excel" ? "M3 8l8 9M11 8l-8 9" : "M2 8l2 9 3-8 3 8 2-9"} stroke="#fff" strokeWidth="2" fill="none" />
        </>
      )}
    </svg>
  );
};

const Taskbar = () => (
  <footer className={`h-[21px] shrink-0 overflow-hidden bg-[#101010] text-sm text-white ${SANS}`}>
    <div className="flex h-[42px]">
      <button aria-label="Start" className="flex w-[51px] items-center justify-center">
        <svg viewBox="0 0 16 16" className="size-4" fill="#fff">
          <path d="M0 2l7-1v7H0zM8 1l8-1v8H8zM0 9h7v6l-7-1zM8 9h8v7l-8-1z" />
        </svg>
      </button>
      {tasks.map((task, i) => (
        <button
          key={i}
          className={`flex w-[101px] shrink-0 items-center gap-[5px] overflow-hidden whitespace-nowrap pl-2 ${
            i === 6 ? "bg-[#9c5418]" : i === 10 ? "bg-[#333]" : ""
          }`}
        >
          <TaskIcon icon={task.icon} />
          {task.name}
        </button>
      ))}
      <div className="ml-2 flex flex-1 items-center gap-3">
        <svg viewBox="0 0 10 6" className="h-1.5 w-2.5">
          <path d="M1 5l4-4 4 4" fill="none" stroke="#fff" strokeWidth="1.500" />
        </svg>
        <svg viewBox="0 0 16 14" className="h-3.5 w-4">
          <path d="M1 0l7 8 7-8M8 8v6" fill="none" stroke="#c050d0" strokeWidth="3" />
        </svg>
        <svg viewBox="0 0 14 14" className="size-3.5">
          <ellipse cx="6" cy="6" rx="3" ry="6" fill="none" stroke="#ccc" transform="rotate(-35 6 6)" />
        </svg>
        <svg viewBox="0 0 14 14" className="size-3.5">
          <path d="M14 0C8 1 5 4 5 8c-2 0-3 1-5 5 5-2 11-1 12-7l-4 1c1-3 3-5 6-7z" fill="#d8381c" />
        </svg>
        <span>英</span>
        <svg viewBox="0 0 14 14" className="size-3.5">
          <path d="M0 2l12-2 2 12-12 2z" fill="#3cb01e" />
          <path d="M10 4c-6-2-7 2-3 3s3 5-3 3" fill="none" stroke="#fff" strokeWidth="2" />
        </svg>
        <span className="ml-auto self-start pt-0.5 text-[13px]">9:18</span>
        <svg viewBox="0 0 16 16" className="ml-5 mr-6 size-4">
          <path d="M1 1h14v11h-4v3l-3-3H1z" fill="none" stroke="#fff" strokeWidth="1.500" />
        </svg>
      </div>
    </div>
  </footer>
);

const MenuLabel = ({ name, at }: { name: string; at: number }) =>
  at < 0 ? (
    <>{name}</>
  ) : (
    <>
      {name.slice(0, at)}
      <span className="underline underline-offset-4">{name[at]}</span>
      {name.slice(at + 1)}
    </>
  );

export default function App() {
  return (
    <div className="relative flex h-screen flex-col overflow-hidden bg-[#8fa3c4] text-black">
      <div className="mr-2 flex min-h-0 flex-1 flex-col border-t border-[#555] bg-[#9bdbdb]">
        <header className={`flex h-[30px] shrink-0 items-center bg-white text-base leading-7 ${SANS}`}>
          <XIcon />
          <span className="ml-1 h-[30px] flex-1">Graphic Editor 9.07b2 (00@HY-HYCAM-PC064 - Windows, pid:16780)</span>
          <div className="flex items-center gap-[30px] pr-3.5">
            <button aria-label="Minimize"><Minus size={16} strokeWidth={1.5} /></button>
            <button aria-label="Maximize"><Square size={14} strokeWidth={1.5} /></button>
            <button aria-label="Close"><X size={17} strokeWidth={1.2} /></button>
          </div>
        </header>

        <div className="flex h-[57px] shrink-0 border-t-2 border-[#568a8a]">
          <nav className={`flex flex-1 items-center gap-[18px] border-b-2 border-r-2 border-t-2 border-b-[#568a8a] border-r-[#568a8a] border-t-[#cdf3f3] pb-[3px] pl-1.5 text-sm font-bold ${SERIF}`}>
            {mainMenu.map((item) => (
              <button key={item.name}>
                <MenuLabel {...item} />
              </button>
            ))}
            <button className="ml-auto mr-3">Help</button>
          </nav>
          <div className="ml-0.5 flex w-[413px] border-l-2 border-[#568a8a] pl-1">
            <div className="shrink-0 pt-2">
              <FrontlineLogo />
            </div>
            <div className={`shrink-0 whitespace-nowrap text-center font-bold ${SERIF}`}>
              <div className="text-2xl leading-7">Genesis 2000</div>
              <div className="text-sm italic leading-6">Graphic Editor</div>
            </div>
            <div className={`ml-[5px] shrink-0 whitespace-nowrap pt-[3px] text-center text-[15px] font-bold italic leading-[15px] ${MONO}`}>
              04 Dec 2023
              <br />
              <span className="pl-5">09:07 AM</span>
              <div className="ml-12 mt-1.5 flex justify-center gap-1">
                <span className="h-4 w-[3px] bg-[#f01010]" />
                <span className="h-4 w-[3px] bg-[#f01010]" />
              </div>
            </div>
          </div>
        </div>

        <main className="flex min-h-0 flex-1">
          <LayerPanel />
          <div className="min-w-0 flex-1">
            <BoardView />
          </div>
          <OverviewPanel />
        </main>

        <div className={`flex h-9 shrink-0 border-b-2 border-t-2 border-black bg-[#ffffcc] text-xs font-bold ${MONO}`}>
          <button aria-label="Zoom to point" className={`w-[25px] border-r ${CREAM_UP}`}>
            <svg viewBox="0 0 20 20" className="size-5" fill="none" stroke="#000">
              <path d="M0 .5h18v18H0M3 4l12 12M3 8V4h4M15 12v4h-4" />
            </svg>
          </button>
          <button aria-label="Angle" className={`flex w-[33px] items-center justify-center ${CREAM_UP}`}>
            <svg viewBox="0 0 22 22" className="size-[22px]" fill="none" stroke="#000">
              <path d="M.5.500h21v21H.5zM5 17L17 5M7 4v4M5 17h5M12 14h3v3h-3zM17 14l2 3" />
            </svg>
          </button>
          <button aria-label="Grid" className="flex w-[30px] items-center justify-center border-4 border-[#53ceb0] bg-[#ffffcc]">
            <svg viewBox="0 0 16 18" className="h-[18px] w-4" fill="none" stroke="#000">
              <path d="M.5.500h15v17H.5zM3 8l5-5h5v12H3zM8 3v12M3 9h10" />
            </svg>
          </button>
          <label className="flex items-start gap-2.5 pl-1 pt-2">
            X Y :
            <input aria-label="Coordinates" defaultValue="x" className="-mt-2 h-8 w-[171px] border-2 border-[#b5b58a] bg-[#ffffcc] pl-1" />
          </label>
          <button className="mx-0.5 w-[30px] border-4 border-[#53ceb0] text-sm">!</button>
          <span className="whitespace-pre border-l-2 border-black pl-1 pt-2">&lt;M1&gt; - Select first rectangle corner</span>
          <div className="ml-auto border-l-2 border-black bg-[#53ceb0] p-1 text-[15px]">
            <OptionMenu label="Units" value="Inch" className="h-full w-[70px] pl-1" bevel={TEAL_UP} />
          </div>
        </div>

        <div className="h-[27px] shrink-0 border-t-2 border-[#568a8a] bg-[#e8ffff] pb-px pr-0.5">
          <div className={`h-full border-2 border-b-[#6b9c9c] border-l-0 border-r-[#6b9c9c] border-t-[#d8ffff] bg-[#b3ffff] text-center text-xs font-bold leading-[22px] ring-1 ring-black ${MONO}`}>
            DX=0,DY=-0.002916,D=0.002916
          </div>
        </div>
      </div>

      <Taskbar />

      <ChecklistEditor />
      <MeasurePopup />
      <ResultsViewer />
      <ResultsHistogram />
      <InputMethodBar />
    </div>
  );
}
